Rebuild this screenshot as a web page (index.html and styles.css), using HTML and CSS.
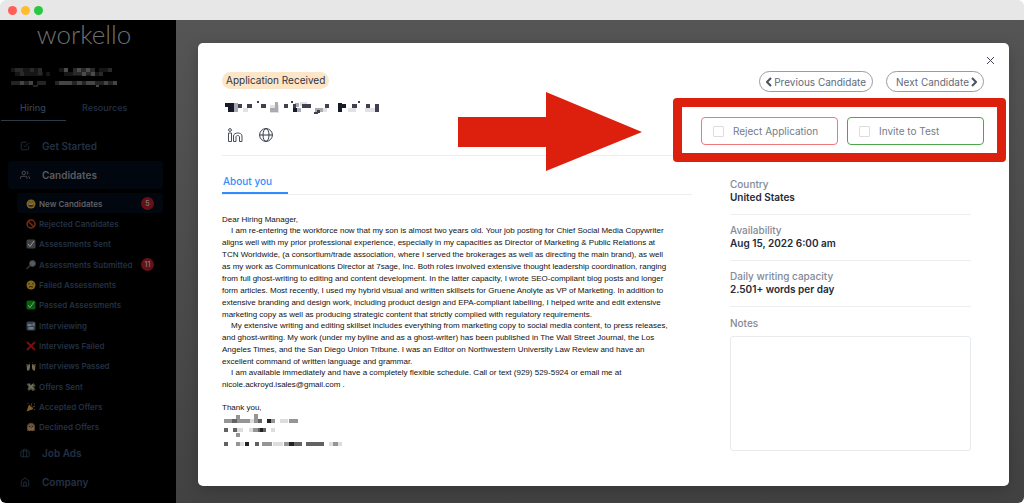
FILE: index.html
```
<!DOCTYPE html>
<html lang="en">
<head>
    <meta charset="UTF-8">
    <title>Workello</title>
    <link rel="stylesheet" href="styles.css">
</head>
<body>
    <div class="window">
        <div class="titlebar">
            <span class="dot red"></span>
            <span class="dot yellow"></span>
            <span class="dot green"></span>
        </div>

        <div class="app">
            <aside class="sidebar">
                <div class="logo">workello</div>
                <svg class="account" width="110" height="22" viewBox="0 0 110 22" shape-rendering="crispEdges">
                    <path fill="#161616" d="M0 1h31v4H0zM4 5h28v4H4zM35 5h4v4h-4zM48 1h8v4h-8zM53 5h35v4H53zM88 1h13v4H88z"/>
                    <path fill="#292929" d="M4 1h8v4H4zM19 1h4v4h-4zM27 1h4v7h-4zM9 5h4v4H9zM62 1h22v7H62zM88 5h4v4h-4zM97 1h4v4h-4z"/>
                    <path fill="#4b4b4b" d="M53 1h4v4h-4zM66 1h4v4h-4zM75 1h4v4h-4zM71 5h4v4h-4zM80 5h4v4h-4z"/>
                    <path fill="#242424" d="M0 14h22v4H0zM26 14h9v4h-9zM22 18h5v2h-5zM44 14h62v4H44z"/>
                    <path fill="#454545" d="M9 14h4v4H9zM18 14h4v4h-4zM48 14h13v4H48zM66 14h5v4h-5zM75 14h9v4h-9zM93 14h4v4h-4zM102 14h4v4h-4zM85 18h3v2h-3z"/>
                </svg>
                <nav class="tabs">
                    <a href="#" class="tab active">Hiring</a>
                    <a href="#" class="tab">Resources</a>
                </nav>

                <nav class="menu">
                    <a href="#" class="menu-item">
                        <svg class="icon" viewBox="0 0 24 24"><path d="M9 11l3 3L22 4M21 12v7a2 2 0 0 1-2 2H5a2 2 0 0 1-2-2V5a2 2 0 0 1 2-2h11"/></svg>
                        Get Started
                    </a>
                    <a href="#" class="menu-item active">
                        <svg class="icon" viewBox="0 0 24 24"><path d="M17 21v-2a4 4 0 0 0-4-4H5a4 4 0 0 0-4 4v2M23 21v-2a4 4 0 0 0-3-3.87M16 3.13a4 4 0 0 1 0 7.75"/><circle cx="9" cy="7" r="4"/></svg>
                        Candidates
                    </a>
                    <div class="submenu">
                        <a href="#" class="sub-item active">
                            <svg class="emoji" viewBox="0 0 20 20"><circle cx="10" cy="10" r="9" fill="#80671b"/><path d="M4 10h12c0 8-12 8-12 0z" fill="#3c260c"/><path d="M5 10h10v2H5z" fill="#77736b"/><path d="M5 7l2-2 2 2M11 7l2-2 2 2" stroke="#2d2108" fill="none"/></svg>
                            New Candidates<span class="badge">5</span>
                        </a>
                        <a href="#" class="sub-item">
                            <svg class="emoji" viewBox="0 0 20 20"><circle cx="10" cy="10" r="8" fill="none" stroke="#762a18" stroke-width="3"/><path d="M4 4l12 12" stroke="#762a18" stroke-width="3"/></svg>
                            Rejected Candidates
                        </a>
                        <a href="#" class="sub-item">
                            <svg class="emoji" viewBox="0 0 20 20"><rect x="1" y="1" width="18" height="18" rx="3" fill="#3e4144"/><path d="M4 10l4 5 8-11" fill="none" stroke="#96989a" stroke-width="2"/></svg>
                            Assessments Sent
                        </a>
                        <a href="#" class="sub-item">
                            <svg class="emoji" viewBox="0 0 20 20"><path d="M1 18l7-7" stroke="#30363c" stroke-width="3"/><circle cx="13" cy="7" r="6" fill="#555b60" stroke="#3b4146" stroke-width="2"/></svg>
                            Assessments Submitted<span class="badge">11</span>
                        </a>
                        <a href="#" class="sub-item">
                            <svg class="emoji" viewBox="0 0 20 20"><circle cx="10" cy="10" r="9" fill="#80671b"/><path d="M6 6v3M14 6v3M6 14c3-1 5-1 8 0" stroke="#2d2108" stroke-width="2" fill="none"/></svg>
                            Failed Assessments
                        </a>
                        <a href="#" class="sub-item">
                            <svg class="emoji" viewBox="0 0 20 20"><rect x="1" y="1" width="18" height="18" rx="3" fill="#07610d"/><path d="M4 10l4 5 8-11" fill="none" stroke="#8c9b8c" stroke-width="2"/></svg>
                            Passed Assessments
                        </a>
                        <a href="#" class="sub-item">
                            <svg class="emoji" viewBox="0 0 20 20"><rect x="1" y="1" width="18" height="18" rx="3" fill="#35414d"/><path d="M3 6h8v4H3zM13 5l4-1v6l-4-1zM5 12h10v5H5z" fill="#737980"/></svg>
                            Interviewing
                        </a>
                        <a href="#" class="sub-item">
                            <svg class="emoji" viewBox="0 0 20 20"><path d="M2 2l16 16M18 2L2 18" stroke="#791009" stroke-width="4"/></svg>
                            Interviews Failed
                        </a>
                        <a href="#" class="sub-item">
                            <svg class="emoji" viewBox="0 0 20 20"><path d="M1 6h2v4l3-4 2 1v7l-2 5H2zM19 6h-2v4l-3-4-2 1v7l2 5h4z" fill="#756653"/><path d="M6 2l2 2M14 2l-2 2" stroke="#474238"/></svg>
                            Interviews Passed
                        </a>
                        <a href="#" class="sub-item">
                            <svg class="emoji" viewBox="0 0 20 20"><path d="M1 4l6-2 3 4 5-4 4 5-3 4 3 5-6 2-3-3-5 3-2-5 2-3z" fill="#4b4a3a"/><path d="M5 5l10 9M14 5l-8 9" stroke="#72705d" stroke-width="3"/></svg>
                            Offers Sent
                        </a>
                        <a href="#" class="sub-item">
                            <svg class="emoji" viewBox="0 0 20 20"><path d="M6 5l9 9-14 5z" fill="#806024"/><path d="M10 9c2-2 0-5 2-7M12 11l6-3" stroke="#702f35" stroke-width="2" fill="none"/><path d="M3 2h2v2H3zM16 3h2v2h-2zM16 14h2v2h-2z" fill="#23506a"/></svg>
                            Accepted Offers
                        </a>
                        <a href="#" class="sub-item">
                            <svg class="emoji" viewBox="0 0 20 20"><path d="M2 18V9c0-10 16-10 16 0v9z" fill="#493526"/><circle cx="10" cy="10" r="7" fill="#6c5037"/><path d="M3 14l3-6 4 3 4-3 3 6-4 4-3-3-3 3z" fill="#7a6046"/><path d="M6 8l3 3M14 8l-3 3" stroke="#2c2118" stroke-width="2"/></svg>
                            Declined Offers
                        </a>
                    </div>
                    <a href="#" class="menu-item">
                        <svg class="icon" viewBox="0 0 24 24"><rect x="2" y="7" width="20" height="14" rx="2"/><path d="M16 21V5a2 2 0 0 0-2-2h-4a2 2 0 0 0-2 2v16"/></svg>
                        Job Ads
                    </a>
                    <a href="#" class="menu-item">
                        <svg class="icon" viewBox="0 0 24 24"><path d="M3 9l9-7 9 7v11a2 2 0 0 1-2 2H5a2 2 0 0 1-2-2z"/><path d="M9 22V12h6v10"/></svg>
                        Company
                    </a>
                </nav>
            </aside>

            <main class="backdrop">
                <section class="modal">
                    <button class="close" aria-label="Close">
                        <svg width="9" height="9" viewBox="0 0 9 9"><path d="M1 1l7 7M8 1L1 8" stroke="#414958" fill="none"/></svg>
                    </button>

                    <header class="head">
                        <div class="person">
                            <span class="tag">Application Received</span>
                            <svg class="name" width="158" height="16" viewBox="0 0 158 16" shape-rendering="crispEdges">
                                <path fill="#e2e2e5" d="M19 9h5v4h-5zM46 6h9v8h-9zM76 3h7v4h-7zM97 9h6v4h-6zM124 9h8v4h-8zM141 9h12v4h-12z"/>
                                <path fill="#aaaab1" d="M10 4h4v9h-4zM46 9h8v4h-8zM51 3h3v10h-3zM71 4h4v4h-4zM73 9h4v4h-4zM91 9h8v4h-8z"/>
                                <path fill="#171a2b" d="M1 4h9v4H1zM4 8h6v5H4zM69 9h4v4h-4zM114 4h4v9h-4zM118 5h4v4h-4z"/>
                                <path fill="#3f4050" d="M14 5h4v4h-4zM23 5h5v4h-5zM33 2h2v2h-2zM37 5h5v4h-5zM60 5h4v4h-4zM67 2h2v2h-2zM69 5h3v4h-3zM78 5h9v4h-9zM90 13h4v2h-4zM93 11h3v3h-3zM101 5h4v4h-4zM128 5h5v4h-5zM134 2h2v2h-2zM142 5h4v4h-4zM151 5h4v8h-4z"/>
                            </svg>
                            <div class="socials">
                                <a href="#" aria-label="LinkedIn">
                                    <svg width="15" height="14" viewBox="0 0 15 14" fill="none" stroke="#484d5b"><circle cx="2" cy="2" r="1.4"/><path d="M.5 5h3v8.500h-3zM5.500 13.500V8c0-4 8.500-4 8.500 0v5.500h-2.500V9c0-2-3.500-2-3.500 0v4.500z"/></svg>
                                </a>
                                <a href="#" aria-label="Website">
                                    <svg width="14" height="14" viewBox="0 0 14 14" fill="none" stroke="#333949"><circle cx="7" cy="7" r="6.400"/><path d="M.6 7h12.800"/><ellipse cx="7" cy="7" rx="3" ry="6.400"/></svg>
                                </a>
                            </div>
                        </div>
                        <div class="controls">
                            <div class="pager">
                                <button class="pill"><svg width="6" height="10" viewBox="0 0 6 10"><path d="M5 1L1 5l4 4"/></svg>Previous Candidate</button>
                                <button class="pill">Next Candidate<svg width="6" height="10" viewBox="0 0 6 10"><path d="M1 1l4 4-4 4"/></svg></button>
                            </div>
                            <div class="actions">
                                <label class="action reject"><input type="checkbox">Reject Application</label>
                                <label class="action invite"><input type="checkbox">Invite to Test</label>
                            </div>
                        </div>
                    </header>

                    <div class="content">
                        <div class="about">
                            <div class="about-tabs">
                                <a href="#" class="about-tab">About you</a>
                            </div>
                            <div class="letter">
                                <p>Dear Hiring Manager,</p>
                                <p class="indent">I am re-entering the workforce now that my son is almost two years old. Your job posting for Chief Social Media Copywriter<br>aligns well with my prior professional experience, especially in my capacities as Director of Marketing &amp; Public Relations at<br>TCN Worldwide, (a consortium/trade association, where I served the brokerages as well as directing the main brand), as well<br>as my work as Communications Director at 7sage, Inc. Both roles involved extensive thought leadership coordination, ranging<br>from full ghost-writing to editing and content development. In the latter capacity, I wrote SEO-compliant blog posts and longer<br>form articles. Most recently, I used my hybrid visual and written skillsets for Gruene Anolyte as VP of Marketing. In addition to<br>extensive branding and design work, including product design and EPA-compliant labelling, I helped write and edit extensive<br>marketing copy as well as producing strategic content that strictly complied with regulatory requirements.</p>
                                <p class="indent">My extensive writing and editing skillset includes everything from marketing copy to social media content, to press releases,<br>and ghost-writing. My work (under my byline and as a ghost-writer) has been published in The Wall Street Journal, the Los<br>Angeles Times, and the San Diego Union Tribune. I was an Editor on Northwestern University Law Review and have an<br>excellent command of written language and grammar.</p>
                                <p class="indent">I am available immediately and have a completely flexible schedule. Call or text (929) 529-5924 or email me at<br>nicole.ackroyd.isales@gmail.com .</p>
                                <p class="closing">Thank you,</p>
                            </div>
                            <svg class="signature" width="124" height="34" viewBox="0 0 124 34" shape-rendering="crispEdges">
                                <path fill="#ddd" d="M27 5h5v4h-5zM58 5h8v4h-8zM14 14h7v4h-7zM27 14h4v4h-4zM49 14h4v4h-4zM18 28h4v4h-4zM51 28h10v4H51zM107 28h4v4h-4zM116 28h4v4h-4z"/>
                                <path fill="#959595" d="M2 5h26v4H2zM14 1h4v4h-4zM32 0h4v9h-4zM49 5h4v4h-4zM67 5h9v4h-9zM31 14h5v4h-5zM14 19h4v4h-4zM14 28h4v4h-4zM40 28h10v4H40zM62 28h5v4h-5zM111 28h5v4h-5z"/>
                                <path fill="#626262" d="M10 5h5v4h-5zM36 5h4v4h-4zM2 14h4v4H2zM11 14h4v4h-4zM36 14h8v4h-8zM2 28h4v4H2zM33 28h4v4h-4zM72 28h8v4h-8zM84 28h18v4H84z"/>
                                <path fill="#222" d="M45 5h4v4h-4zM38 14h3v4h-3zM23 28h4v4h-4zM67 28h5v4h-5z"/>
                            </svg>
                        </div>

                        <div class="details">
                            <dl>
                                <div class="detail"><dt>Country</dt><dd>United States</dd></div>
                                <div class="detail"><dt>Availability</dt><dd>Aug 15, 2022 6:00 am</dd></div>
                                <div class="detail"><dt>Daily writing capacity</dt><dd>2.501+ words per day</dd></div>
                            </dl>
                            <label for="notes">Notes</label>
                            <textarea id="notes"></textarea>
                        </div>
                    </div>

                    <svg class="arrow" width="184" height="80" viewBox="0 0 184 80"><path d="M0 25h88V0l96 40-96 39V55H0z" fill="#dc200d"/></svg>
                    <div class="highlight"></div>
                </section>
            </main>
        </div>
    </div>
</body>
</html>
```

FILE: styles.css
```
* {
    box-sizing: border-box;
}
body {
    margin: 0;
    background-color: #fff;
    font-family: Inter, "Liberation Sans", sans-serif;
    font-size: 10px;
}
a {
    color: inherit;
    text-decoration: none;
}
button {
    font-family: inherit;
    cursor: pointer;
}
p, dl, dd {
    margin: 0;
}
svg {
    display: block;
    flex-shrink: 0;
}

.window {
    display: flex;
    flex-direction: column;
    height: 100vh;
    border-radius: 6px;
    overflow: hidden;
}
.titlebar {
    display: flex;
    align-items: center;
    gap: 4px;
    height: 20px;
    flex-shrink: 0;
    padding: 1px 8px 0;
    background-color: #e7e7e7;
}
.dot {
    width: 9px;
    height: 9px;
    border-radius: 50%;
}
.red { background-color: #ff5f57; }
.yellow { background-color: #febc2e; }
.green { background-color: #28c840; }

.app {
    display: flex;
    flex: 1;
    min-height: 0;
}

/* sidebar */
.sidebar {
    width: 176px;
    flex-shrink: 0;
    background-color: #000;
    color: #233144;
}
.logo {
    height: 28px;
    padding-right: 8px;
    font-family: Lato, sans-serif;
    font-size: 26px;
    font-weight: 300;
    line-height: 28px;
    text-align: center;
    color: #707070;
}
.account {
    margin: 19px 0 0 11px;
}
.tabs {
    display: flex;
    margin-top: 6px;
    padding-left: 1px;
}
.tab {
    padding: 0 16px;
    font-size: 9px;
    font-weight: 500;
    line-height: 25px;
    border-bottom: 1px solid transparent;
}
.tab.active {
    width: 65px;
    padding: 0 19px;
    color: #334354;
    border-color: #2a3b49;
}
.menu {
    padding: 11px 13px 0 8px;
}
.menu-item {
    display: flex;
    align-items: center;
    gap: 12px;
    height: 28px;
    margin-bottom: 1px;
    padding-left: 12px;
    border-radius: 4px;
    font-weight: 600;
}
.menu-item.active {
    background-color: #02060f;
    color: #5a5b5e;
}
.icon {
    width: 10px;
    height: 10px;
    fill: none;
    stroke: currentColor;
    stroke-width: 2;
}
.submenu {
    display: grid;
    grid-auto-rows: 1fr;
    height: 244px;
    margin: 4px 0 2px 9px;
}
.sub-item {
    display: flex;
    align-items: center;
    gap: 3px;
    padding: 1px 9px 0;
    border-radius: 3px;
    font-size: 8px;
    font-weight: 600;
    white-space: nowrap;
}
.sub-item.active {
    background-color: #02060f;
    color: #5f6165;
}
.emoji {
    width: 10px;
    height: 10px;
}
.badge {
    width: 13px;
    height: 13px;
    margin-left: auto;
    border-radius: 50%;
    background-color: #651217;
    color: #777;
    font-size: 7px;
    line-height: 13px;
    text-align: center;
}

/* candidate window */
.backdrop {
    display: flex;
    flex: 1;
    min-width: 0;
    padding: 23px 15px 17px 22px;
    background: linear-gradient(#555, #424242);
}
.modal {
    position: relative;
    flex: 1;
    min-width: 0;
    padding: 28px 25px 0 24px;
    border-radius: 5px;
    background-color: #fff;
    box-shadow: 0 4px 16px rgba(0, 0, 0, 0.2);
}
.close {
    position: absolute;
    top: 13px;
    right: 14px;
    padding: 0;
    border: 0;
    background: none;
}
.head {
    display: flex;
    gap: 9px;
}
.person {
    flex: 1;
    height: 85px;
    border-bottom: 1px solid #eee;
}
.tag {
    display: inline-block;
    margin-top: 1px;
    padding: 0 4px;
    border-radius: 9px;
    background-color: #fde5c8;
    font-size: 10px;
    line-height: 17px;
    color: #30343d;
}
.name {
    margin: 10px 0 0 2px;
}
.socials {
    display: flex;
    gap: 16px;
    margin: 13px 0 0 6px;
}
.controls {
    width: 283px;
}
.pager {
    display: flex;
    justify-content: flex-end;
    gap: 13px;
}
.pill {
    display: flex;
    align-items: center;
    gap: 2px;
    height: 21px;
    padding: 0 6px;
    border: 1px solid #999ca3;
    border-radius: 11px;
    background-color: #fff;
    color: #626a7a;
    font-size: 10px;
    white-space: nowrap;
}
.pill:last-child {
    padding-left: 9px;
}
.pill svg {
    fill: none;
    stroke: #4a5263;
    stroke-width: 2;
}
.actions {
    display: flex;
    gap: 9px;
    margin-top: 25px;
}
.action {
    display: flex;
    align-items: center;
    gap: 9px;
    flex: 1;
    height: 28px;
    padding-left: 11px;
    border: 1px solid;
    border-radius: 4px;
    color: #757c8a;
    white-space: nowrap;
}
.action.reject { border-color: #f0787d; }
.action.invite { border-color: #4ca64c; }
.action input {
    appearance: none;
    width: 11px;
    height: 11px;
    margin: 0;
    border: 1px solid #ddd;
    border-radius: 1px;
}

.content {
    display: flex;
    gap: 38px;
    margin-top: 16px;
    padding-right: 13px;
}
.about {
    flex: 1;
    min-width: 0;
}
.about-tabs {
    display: flex;
    height: 23px;
    border-bottom: 1px solid #eee;
}
.about-tab {
    width: 66px;
    padding-left: 1px;
    border-bottom: 2px solid #2f8eff;
    color: #2f8eff;
    font-weight: 500;
    line-height: 18px;
}
.letter {
    margin-top: 19px;
    font-family: "Liberation Sans", Arial, sans-serif;
    font-size: 8px;
    line-height: 12px;
    color: #111;
    white-space: nowrap;
}
.indent {
    margin-top: -1px;
    text-indent: 9px;
}
.closing {
    margin-top: 11px;
}
.details {
    width: 241px;
    padding-top: 6px;
    font-size: 10px;
    line-height: 13px;
    font-weight: 500;
    color: #848a96;
}
.detail {
    height: 46px;
    border-bottom: 1px solid #eee;
    padding-top: 9px;
}
.detail:first-child {
    height: 37px;
    padding-top: 0;
}
.detail dd {
    color: #242938;
    font-weight: 600;
}
.details label {
    display: block;
    margin-top: 10px;
}
.details textarea {
    display: block;
    width: 100%;
    height: 115px;
    margin-top: 6px;
    border: 1px solid #e8ebee;
    border-radius: 3px;
    resize: none;
}

/* callouts drawn over the modal */
.arrow {
    position: absolute;
    top: 49px;
    right: 367px;
}
.highlight {
    position: absolute;
    top: 55px;
    right: 3px;
    width: 333px;
    height: 64px;
    border: 9px solid #dc200d;
    border-radius: 4px;
    pointer-events: none;
}
```
